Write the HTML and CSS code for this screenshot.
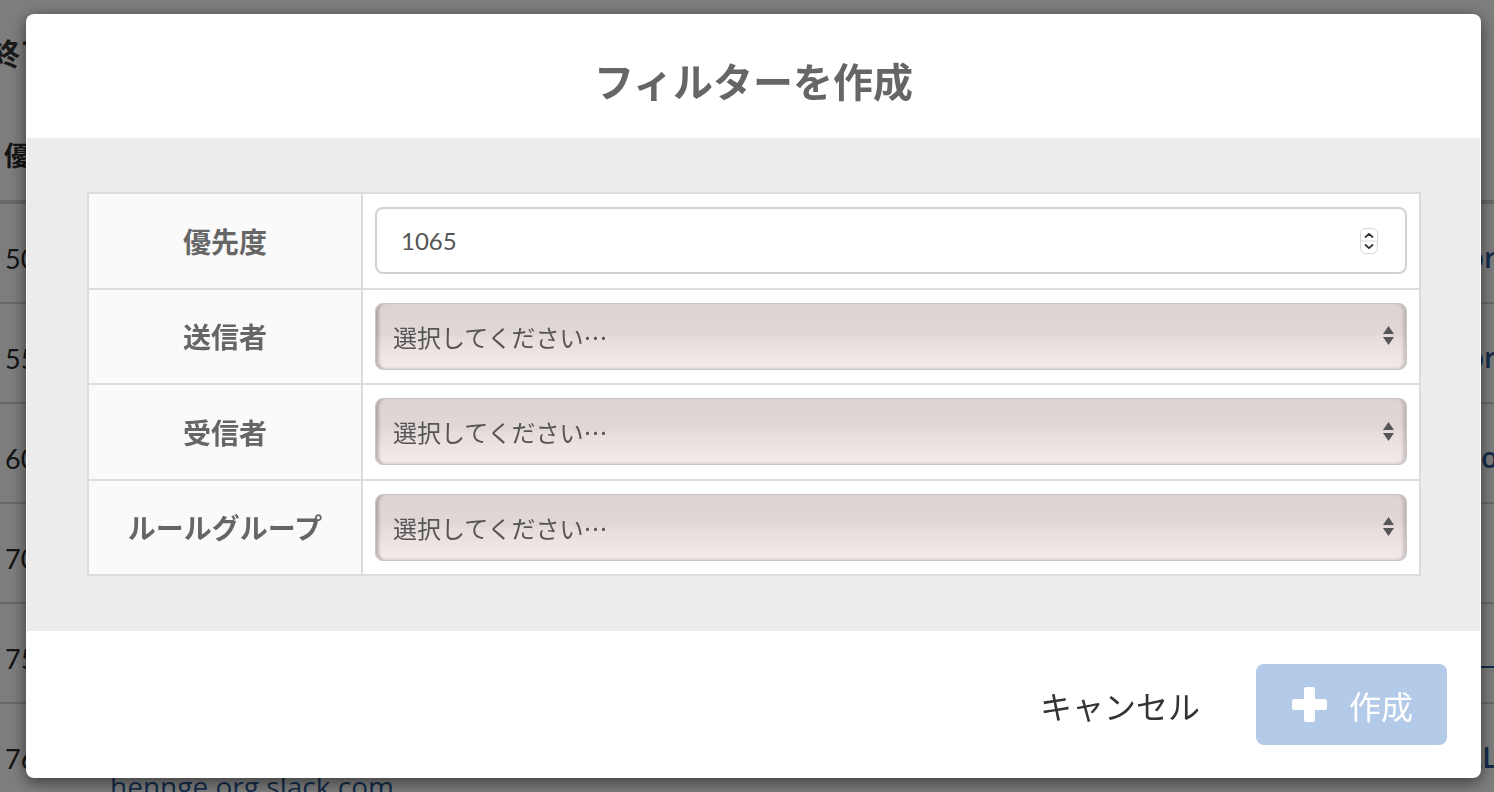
FILE: index.html
```html
<!DOCTYPE html>
<html lang="ja">
<head>
<meta charset="utf-8">
<title>フィルターを作成</title>
<link rel="stylesheet" href="styles.css">
</head>
<body>
<div class="page">
  <div class="page-title">終了したフィルター</div>
  <div class="page-table">
    <div class="page-head"><span class="c-num">優先度</span></div>
    <div class="page-row"><span class="c-num">50</span><span class="c-domain"></span><span class="c-right">org</span></div>
    <div class="page-row"><span class="c-num">55</span><span class="c-domain"></span><span class="c-right">org</span></div>
    <div class="page-row"><span class="c-num">60</span><span class="c-domain"></span><span class="c-right">com</span></div>
    <div class="page-row"><span class="c-num">70</span><span class="c-domain"></span><span class="c-right"></span></div>
    <div class="page-row page-row-link"><span class="c-num">75</span><span class="c-domain"></span><span class="c-right"></span></div>
    <div class="page-row"><span class="c-num">76</span><span class="c-domain"><span class="domain-2">hennge.org.slack.com</span></span><span class="c-right">LL</span></div>
  </div>
</div>
<div class="overlay"></div>
<div class="modal">
  <div class="modal-header">
    <h2 class="modal-title">フィルターを作成</h2>
  </div>
  <div class="modal-body">
    <table class="form-table">
      <tr>
        <th class="label-cell">優先度</th>
        <td class="value-cell">
          <div class="num-input">
            <span class="num-value">1065</span>
            <svg class="spinner" width="18" height="26" viewBox="0 0 18 26">
              <rect x="0.5" y="0.5" width="17" height="25" rx="5" fill="#fff" stroke="#d6d6d6"/>
              <line x1="1" y1="13" x2="17" y2="13" stroke="#dcdcdc"/>
              <path d="M5.5 9 L9 5.8 L12.5 9" fill="none" stroke="#333" stroke-width="1.8" stroke-linecap="round" stroke-linejoin="round"/>
              <path d="M5.5 17 L9 20.2 L12.5 17" fill="none" stroke="#333" stroke-width="1.8" stroke-linecap="round" stroke-linejoin="round"/>
            </svg>
          </div>
        </td>
      </tr>
      <tr>
        <th class="label-cell">送信者</th>
        <td class="value-cell">
          <div class="select-box">
            <span class="select-text">選択してください…</span>
            <svg class="select-arrows" width="11" height="20" viewBox="0 0 11 20"><path d="M0 8 L5.5 0 L11 8 Z M0 11 L11 11 L5.5 19 Z" fill="#555"/></svg>
          </div>
        </td>
      </tr>
      <tr>
        <th class="label-cell">受信者</th>
        <td class="value-cell">
          <div class="select-box">
            <span class="select-text">選択してください…</span>
            <svg class="select-arrows" width="11" height="20" viewBox="0 0 11 20"><path d="M0 8 L5.5 0 L11 8 Z M0 11 L11 11 L5.5 19 Z" fill="#555"/></svg>
          </div>
        </td>
      </tr>
      <tr>
        <th class="label-cell">ルールグループ</th>
        <td class="value-cell">
          <div class="select-box">
            <span class="select-text">選択してください…</span>
            <svg class="select-arrows" width="11" height="20" viewBox="0 0 11 20"><path d="M0 8 L5.5 0 L11 8 Z M0 11 L11 11 L5.5 19 Z" fill="#555"/></svg>
          </div>
        </td>
      </tr>
    </table>
  </div>
  <div class="modal-footer">
    <button class="btn-cancel" type="button">キャンセル</button>
    <button class="btn-create" type="button">
      <svg class="plus" width="35" height="35" viewBox="0 0 35 35"><rect x="12" y="0" width="11" height="35" rx="2.5" fill="#fff"/><rect x="0" y="12" width="35" height="11" rx="2.5" fill="#fff"/></svg>
      <span>作成</span>
    </button>
  </div>
</div>
</body>
</html>
```

FILE: styles.css
```css
html, body {
  margin: 0;
  padding: 0;
}

body {
  width: 1494px;
  height: 792px;
  overflow: hidden;
  background: #ffffff;
  font-family: Lato, "Noto Sans CJK JP", sans-serif;
  color: #333;
}

/* ---------- background page ---------- */
.page {
  margin-left: -10px;
}

.page-title {
  height: 104px;
  line-height: 104px;
  font-family: "Noto Sans CJK JP", sans-serif;
  font-size: 30px;
  font-weight: 700;
  color: #333;
  white-space: nowrap;
}

.page-head {
  height: 100px;
  box-sizing: border-box;
  padding: 36px 0 0 14px;
  font-family: "Noto Sans CJK JP", sans-serif;
  font-size: 26px;
  line-height: 30px;
  font-weight: 700;
  border-bottom: 4px solid #d4d4d4;
}

.page-row {
  height: 98px;
  display: grid;
  grid-template-columns: 120px 1342px 1fr;
  align-items: start;
  border-bottom: 2px solid #d4d4d4;
  padding-left: 15px;
  white-space: nowrap;
}

.c-num {
  font-size: 27px;
  padding-top: 38px;
  color: #2a2a2a;
}

.c-domain {
  display: flex;
  flex-direction: column;
  font-family: "Open Sans", sans-serif;
  font-size: 28px;
  line-height: 36px;
  padding-top: 64px;
  margin-left: -15px;
  color: #2a5a96;
}

.c-right {
  font-family: "Open Sans", sans-serif;
  font-size: 28px;
  padding-top: 34px;
  color: #2a5a96;
  font-weight: 600;
}

.page-row-link .c-right {
  border-top: 2px solid #2a5a96;
  margin-top: 62px;
  padding-top: 0;
}

.overlay {
  position: fixed;
  inset: 0;
  background: rgba(0, 0, 0, 0.51);
}

/* ---------- modal ---------- */
.modal {
  position: fixed;
  left: 26px;
  top: 14px;
  width: 1455px;
  height: 764px;
  box-sizing: border-box;
  padding: 0 1px;
  background: #fff;
  border-radius: 8px;
  box-shadow: 0 4px 16px rgba(0, 0, 0, 0.55);
  display: flex;
  flex-direction: column;
  overflow: hidden;
}

.modal-header {
  height: 124px;
  flex: none;
  display: flex;
  align-items: center;
  justify-content: center;
}

.modal-title {
  margin: 0;
  padding-top: 0;
  font-family: "Noto Sans CJK JP", sans-serif;
  font-size: 40px;
  line-height: 1;
  font-weight: 700;
  color: #666;
  letter-spacing: 0;
  position: relative;
  top: 4px;
}

.modal-body {
  flex: none;
  background: #ececec;
  padding: 54px 59px 55px 60px;
}

.form-table {
  width: 100%;
  border-collapse: collapse;
  border: 2px solid #dcdcdc;
}

.form-table tr {
  border-bottom: 2px solid #dcdcdc;
}

.label-cell {
  width: 272px;
  background: #fafafa;
  border-right: 2px solid #dcdcdc;
  padding: 0;
  font-family: "Noto Sans CJK JP", sans-serif;
  font-size: 28px;
  font-weight: 700;
  color: #666;
  text-align: center;
  vertical-align: middle;
}

.value-cell {
  background: #fff;
  padding: 13px 12px 13.5px 12px;
  vertical-align: middle;
}

.num-input {
  height: 67px;
  box-sizing: border-box;
  border: 2px solid #d2d2d2;
  border-radius: 8px;
  background: #fff;
  display: flex;
  align-items: center;
  justify-content: space-between;
  padding: 0 27px 0 24px;
}

.num-value {
  font-family: Lato, sans-serif;
  font-size: 24px;
  color: #555;
}

.spinner {
  display: block;
}

.select-box {
  height: 67px;
  box-sizing: border-box;
  border: 1px solid #cbc4c4;
  border-radius: 8px;
  background: linear-gradient(to bottom, #ded3d3 0%, #e1d7d7 47%, #e7dcdc 51%, #efe5e5 80%, #f3eaea 100%);
  box-shadow: inset 5px 0 3px -2px rgba(0, 0, 0, 0.2), inset -5px 0 3px -2px rgba(0, 0, 0, 0.14), inset 0 -2px 2px rgba(0, 0, 0, 0.06);
  display: flex;
  align-items: center;
  justify-content: space-between;
  padding: 0 12px 0 17px;
}

.select-text {
  font-family: "Noto Sans CJK JP", sans-serif;
  font-size: 24px;
  color: #555;
}

.select-arrows {
  display: block;
}

.modal-footer {
  flex: 1;
  display: flex;
  align-items: center;
  justify-content: flex-end;
  gap: 56px;
  padding-right: 33px;
}

.btn-cancel {
  border: 0;
  background: transparent;
  padding: 0;
  font-family: "Noto Sans CJK JP", sans-serif;
  font-size: 32px;
  color: #333;
}

.btn-create {
  width: 191px;
  height: 81px;
  border: 0;
  border-radius: 8px;
  background: #b4cae9;
  color: #fff;
  display: flex;
  align-items: center;
  gap: 22px;
  padding: 0 0 0 36px;
  box-sizing: border-box;
  font-family: "Noto Sans CJK JP", sans-serif;
  font-size: 32px;
}

.plus {
  display: block;
  flex: none;
}
```
